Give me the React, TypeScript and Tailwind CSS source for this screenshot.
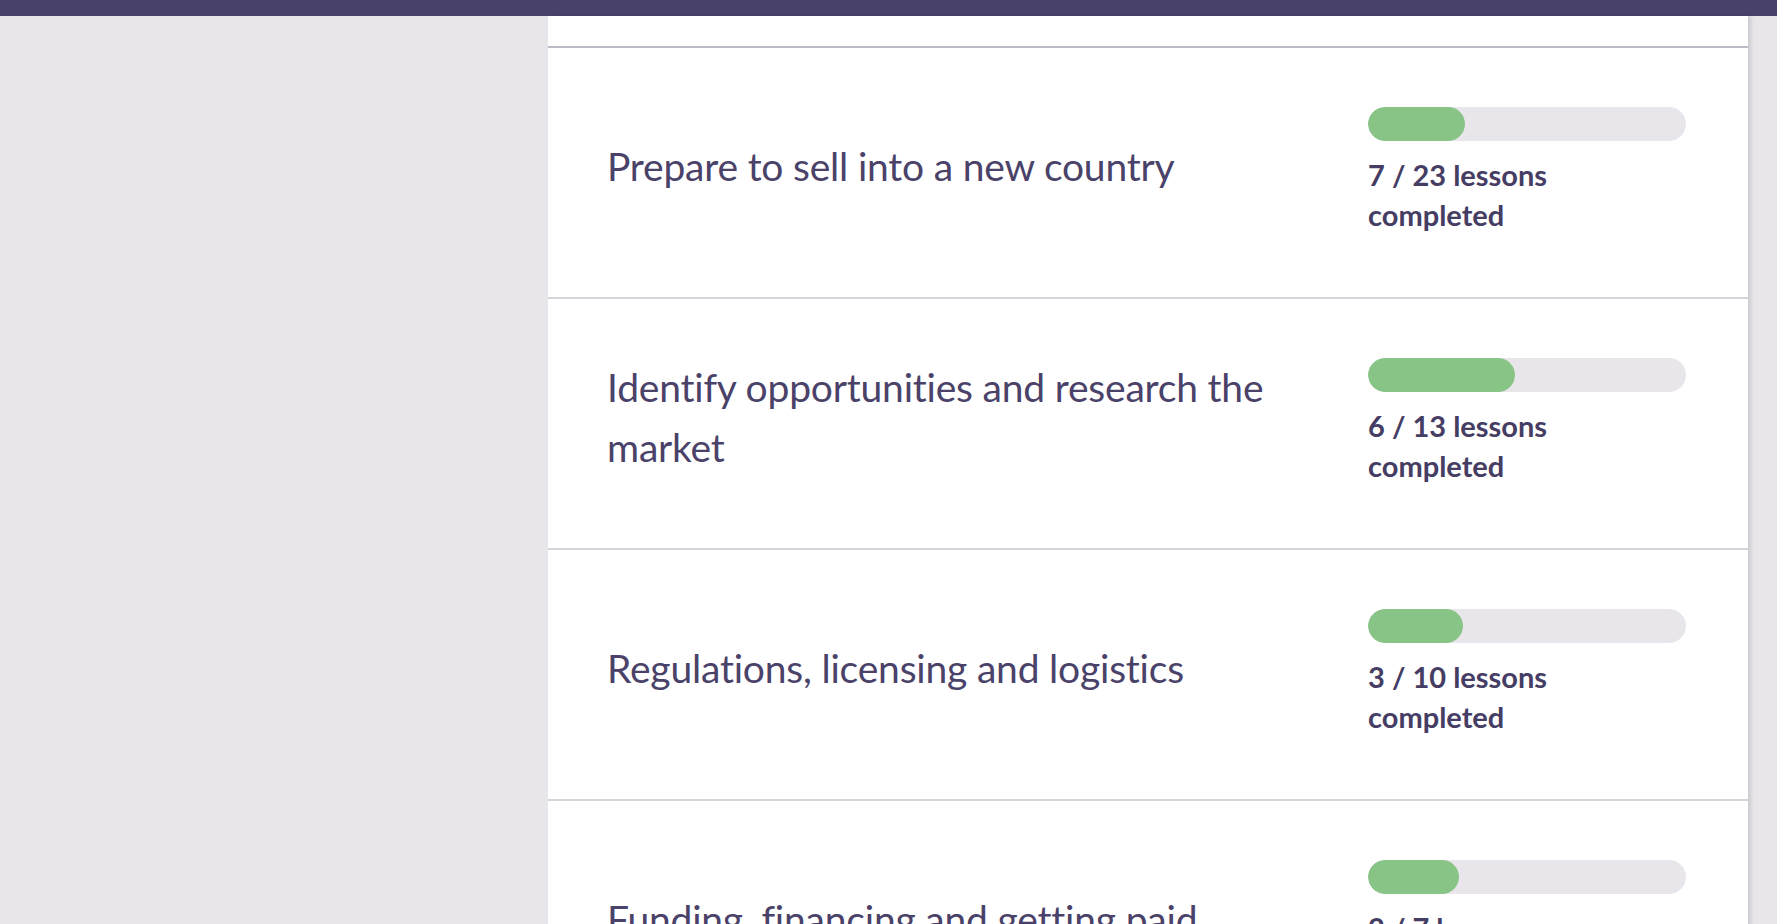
const courses = [
  { title: "Prepare to sell into a new country", done: 7, total: 23 },
  { title: "Identify opportunities and research the market", done: 6, total: 13 },
  { title: "Regulations, licensing and logistics", done: 3, total: 10 },
  { title: "Funding, financing and getting paid", done: 2, total: 7 },
];

export default function App() {
  return (
    <div className="h-[924px] overflow-hidden bg-[#e8e6eb] font-['Lato','Noto_Sans',sans-serif] text-[#4a4269]">
      {/* Top bar */}
      <div className="h-4 bg-[#48416a]" />

      <div className="flex">
        <div className="w-[548px] shrink-0" />

        {/* Course list card */}
        <div className="w-[1200px] shrink-0 bg-white shadow-[3px_0_4px_rgba(0,0,0,0.12)]">
          <div className="h-[30px]" />
          {courses.map(({ title, done, total }, i) => (
            <div
              key={title}
              className={`flex h-[251px] items-center gap-[56px] border-t-2 pl-[59px] pr-[62px] ${
                i === 0 ? "border-[#bdbbc5]" : "border-[#d6d4db]"
              }`}
            >
              <div className="min-w-0 flex-1 pb-[14px] text-[39px] leading-[60px] tracking-[-0.2px]">{title}</div>
              <div className="w-[318px] shrink-0 pb-[3px]">
                <div className="h-[34px] overflow-hidden rounded-full bg-[#e8e6eb]">
                  <div
                    className="h-full rounded-full bg-[#88c486]"
                    style={{ width: `${(done / total) * 100}%` }}
                  />
                </div>
                <div className="mt-[14px] text-[29px] font-bold leading-[40px] text-[#453d63]">
                  {done} / {total} lessons
                  <br />
                  completed
                </div>
              </div>
            </div>
          ))}
        </div>
      </div>
    </div>
  );
}
